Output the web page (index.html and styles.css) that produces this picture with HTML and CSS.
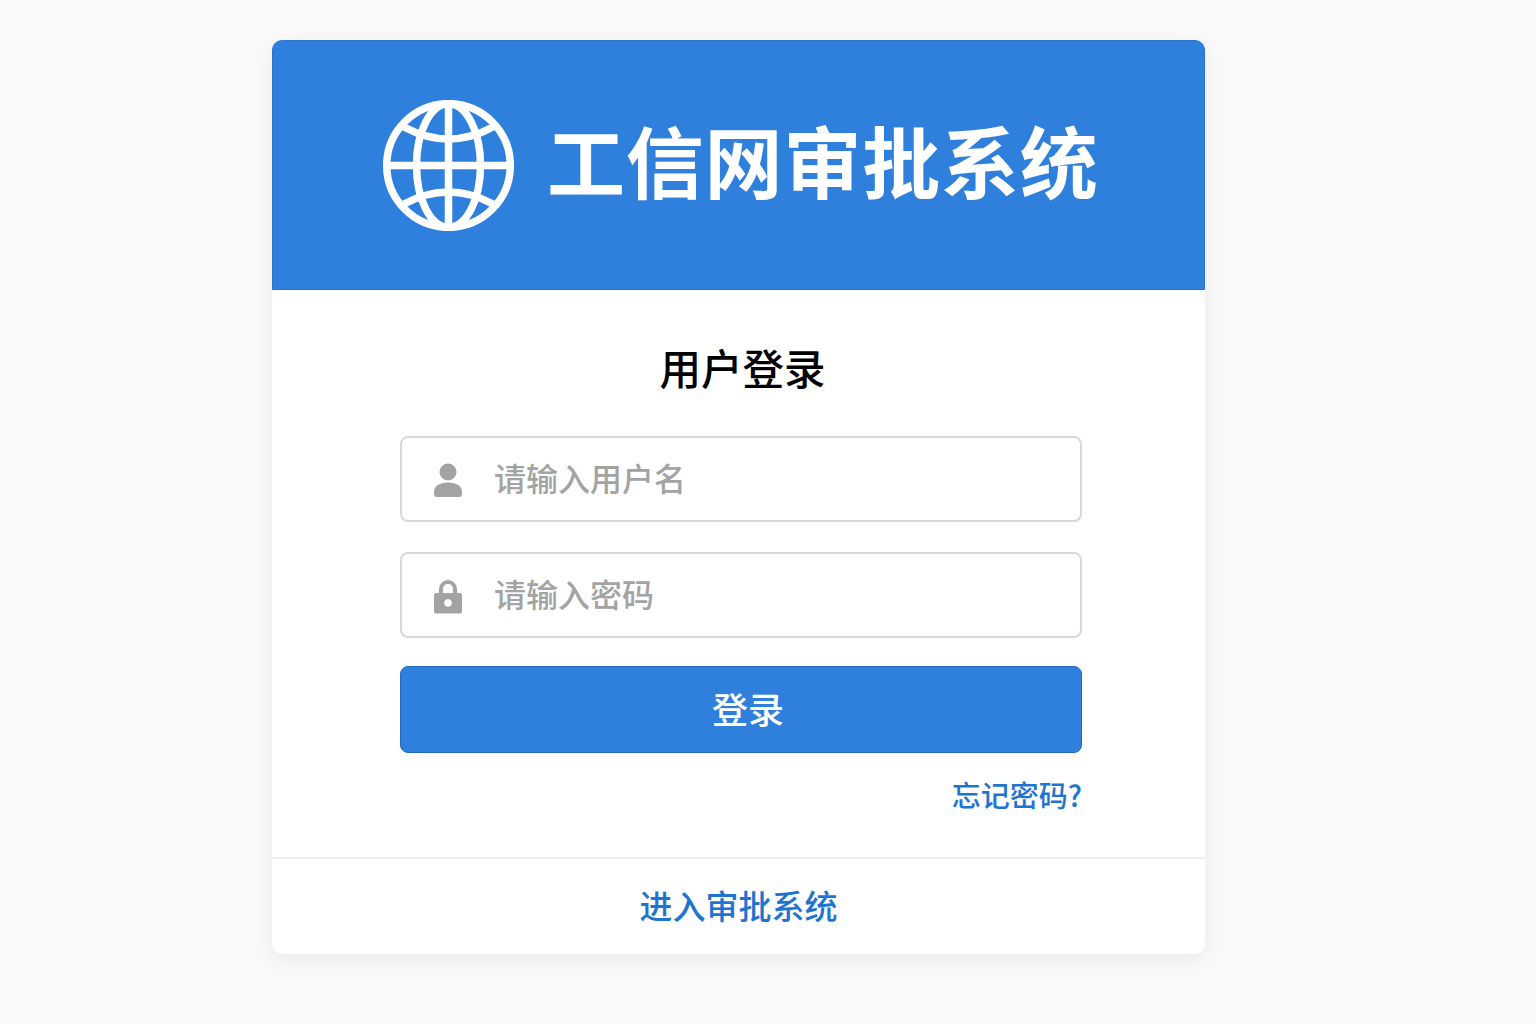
FILE: index.html
```html
<!DOCTYPE html>
<html lang="zh-CN">
<head>
<meta charset="utf-8">
<title>工信网审批系统</title>
<link rel="stylesheet" href="styles.css">
</head>
<body>
<main class="card">
  <header class="banner">
    <svg class="globe" viewBox="0 0 131 131" fill="none" stroke="#fff" stroke-width="7.500">
      <circle cx="65.5" cy="65.5" r="61.800"/>
      <ellipse cx="65.5" cy="65.5" rx="32" ry="61.800"/>
      <path d="M65.5 3.5V127.500M3.500 65.500H127.500"/>
      <path d="M21 27Q65.500 51 110 27M21 104Q65.500 80 110 104"/>
    </svg>
    <h1 class="brand">工信网审批系统</h1>
  </header>
  <section class="body">
    <h2 class="heading">用户登录</h2>
    <form class="form">
      <label class="field">
        <svg class="field-icon" viewBox="0 0 30 36" fill="#a3a3a3">
          <circle cx="15" cy="9" r="8.500"/>
          <path d="M1 29C1 23 7 19.500 15 19.500S29 23 29 29V31C29 33 28 34 26 34H4C2 34 1 33 1 31Z"/>
        </svg>
        <input class="input" type="text" placeholder="请输入用户名">
      </label>
      <label class="field">
        <svg class="field-icon" viewBox="0 0 30 36">
          <path d="M8 16V10.500C8 6 11 3 15 3S22 6 22 10.500V16" fill="none" stroke="#a3a3a3" stroke-width="4"/>
          <path d="M3 14H27C28 14 29 15 29 16V32C29 33.500 28 34.500 27 34.500H3C2 34.500 1 33.500 1 32V16C1 15 2 14 3 14Z" fill="#a3a3a3"/>
          <circle cx="15" cy="24" r="3.800" fill="#fff"/>
        </svg>
        <input class="input" type="password" placeholder="请输入密码">
      </label>
      <button class="submit" type="button">登录</button>
      <a class="forgot" href="#">忘记密码?</a>
    </form>
  </section>
  <footer class="foot">
    <a class="enter" href="#">进入审批系统</a>
  </footer>
</main>
</body>
</html>
```
FILE: styles.css
```css
* { box-sizing: border-box; }
html, body { margin: 0; height: 100%; }
body {
  background: #fafafa;
  padding: 40px 0 0 272px;
  font-family: "Noto Sans CJK SC", "Liberation Sans", sans-serif;
}
.card {
  width: 933px;
  height: 914px;
  background: #fff;
  border-radius: 10px;
  box-shadow: 0 6px 24px rgba(0, 0, 0, 0.07);
  display: flex;
  flex-direction: column;
}
.banner {
  height: 250px;
  background: #2f80dc;
  border: 1px solid #2a75cc;
  border-radius: 10px 10px 0 0;
  display: flex;
  align-items: center;
  padding-left: 110px;
  gap: 33px;
}
.globe { width: 131px; height: 131px; flex: none; }
.brand {
  margin: 0;
  padding-bottom: 12px;
  color: #fff;
  font-size: 78px;
  font-weight: 700;
  line-height: 1;
  letter-spacing: 0.8px;
  white-space: nowrap;
}
.body {
  flex: 1;
  padding: 53px 123px 0 128px;
  display: flex;
  flex-direction: column;
}
.heading {
  margin: 0;
  height: 48px;
  font-size: 41.500px;
  line-height: 48px;
  font-weight: 500;
  color: #000;
  text-align: center;
  padding-left: 3px;
}
.form {
  margin-top: 45px;
  display: flex;
  flex-direction: column;
}
.field {
  height: 86px;
  display: flex;
  align-items: center;
  gap: 31px;
  padding-left: 31px;
  margin-bottom: 30px;
  border: 2px solid #d8d8d8;
  border-radius: 8px;
  background: #fff;
}
.field + .submit { margin-top: -2px; }
.field-icon { width: 30px; height: 36px; flex: none; margin-top: 3px; }
.input {
  flex: 1;
  min-width: 0;
  border: 0;
  outline: 0;
  padding: 0 0 4px;
  background: transparent;
  font: inherit;
  font-size: 32px;
  font-weight: 500;
  color: #333;
}
.input::placeholder { color: #a3a3a3; opacity: 1; }
.submit {
  height: 87px;
  border: 1px solid #2068c0;
  border-radius: 8px;
  background: #2f80dc;
  color: #fff;
  font: inherit;
  font-size: 36px;
  font-weight: 500;
  padding: 0 0 4px 14px;
}
.forgot {
  align-self: flex-end;
  margin-top: 20px;
  font-size: 29px;
  font-weight: 500;
  line-height: 42px;
  color: #1f74d0;
  text-decoration: none;
}
.foot {
  height: 97px;
  border-top: 2px solid #f0f0f0;
  display: flex;
  align-items: center;
  justify-content: center;
  padding-bottom: 4px;
}
.enter {
  font-size: 33px;
  font-weight: 500;
  color: #1f74d0;
  text-decoration: none;
}
```
